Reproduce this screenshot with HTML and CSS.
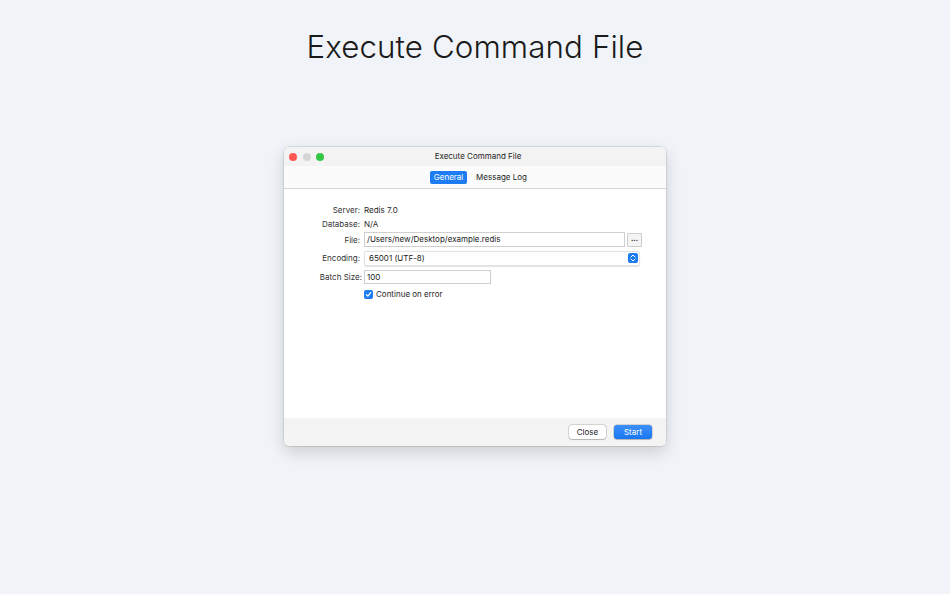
FILE: index.html
```html
<!DOCTYPE html>
<html>
<head>
<meta charset="utf-8">
<link rel="stylesheet" href="styles.css">
</head>
<body>
<h1 class="page-title">Execute Command File</h1>
<div class="window">
  <div class="titlebar">
    <div class="lights">
      <span class="light red"></span>
      <span class="light gray"></span>
      <span class="light green"></span>
    </div>
    <div class="win-title">Execute Command File</div>
  </div>
  <div class="tabbar">
    <span class="tab active">General</span>
    <span class="tab">Message Log</span>
  </div>
  <div class="content">
    <div class="form">
      <div class="label r1">Server:</div>
      <div class="value r1">Redis 7.0</div>
      <div class="label r2">Database:</div>
      <div class="value r2">N/A</div>
      <div class="label r3">File:</div>
      <div class="value r3 file-row">
        <div class="input file-input">/Users/new/Desktop/example.redis</div>
        <div class="dots">...</div>
      </div>
      <div class="label r4">Encoding:</div>
      <div class="value r4">
        <div class="select">
          <span>65001 (UTF-8)</span>
          <span class="stepper">
            <svg width="6" height="8" viewBox="0 0 6 8"><path d="M1 3 L3 1 L5 3 M1 5 L3 7 L5 5" fill="none" stroke="#fff" stroke-width="1" stroke-linecap="round" stroke-linejoin="round"/></svg>
          </span>
        </div>
      </div>
      <div class="label r5 tight">Batch Size:</div>
      <div class="value r5">
        <div class="input batch-input">100</div>
      </div>
      <div class="value r6 check-row">
        <span class="checkbox">
          <svg width="7" height="7" viewBox="0 0 7 7"><path d="M1.3 3.6 L2.8 5.1 L5.7 1.6" fill="none" stroke="#fff" stroke-width="1.3" stroke-linecap="round" stroke-linejoin="round"/></svg>
        </span>
        <span>Continue on error</span>
      </div>
    </div>
  </div>
  <div class="footer">
    <span class="btn">Close</span>
    <span class="btn primary">Start</span>
  </div>
</div>
</body>
</html>
```
FILE: styles.css
```css
html, body {
  margin: 0;
  padding: 0;
}
body {
  background: #f0f4f8;
  font-family: Inter, "Noto Sans", sans-serif;
  width: 950px;
  height: 594px;
  overflow: hidden;
}
.page-title {
  margin: 0;
  padding-top: 26px;
  height: 42px;
  line-height: 42px;
  text-align: center;
  font-weight: 300;
  font-size: 31.3px;
  color: #1a1a1a;
  letter-spacing: 0.1px;
}
.window {
  margin: 79px auto 0;
  width: 382px;
  height: 299px;
  border-radius: 5px;
  background: #fff;
  box-shadow: 0 0 0 0.5px rgba(0,0,0,0.18), 0 6px 16px rgba(0,0,0,0.16);
  display: flex;
  flex-direction: column;
  overflow: hidden;
}
.titlebar {
  height: 19px;
  background: #f3f3f3;
  display: flex;
  align-items: center;
  position: relative;
}
.lights {
  display: flex;
  gap: 5.5px;
  padding-left: 5px;
}
.light {
  width: 8px;
  height: 8px;
  border-radius: 50%;
}
.red { background: #fc5753; }
.gray { background: #d5d5d5; }
.green { background: #33c748; }
.win-title {
  position: absolute;
  left: 0;
  right: 0;
  top: 0;
  line-height: 19px;
  text-align: center;
  font-size: 8px;
  color: #262626;
  padding-left: 6px;
}
.tabbar {
  height: 22px;
  background: #fbfbfb;
  border-bottom: 1px solid #d6d6d6;
  display: flex;
  align-items: center;
  justify-content: center;
  gap: 5px;
  padding-left: 11px;
}
.tab {
  font-size: 8px;
  color: #1e1e1e;
  padding: 0 4px;
  height: 13px;
  line-height: 13px;
  border-radius: 2px;
}
.tab.active {
  width: 37px;
  padding: 0;
  text-align: center;
  background: #1d7cf2;
  color: #fff;
}
.content {
  flex: 1;
  background: #fff;
}
.form {
  display: grid;
  grid-template-columns: 76px 1fr;
  grid-template-rows: 14px 14px 17px 20px 18px 16px;
  padding-top: 14px;
  font-size: 8px;
  color: #262626;
}
.label {
  grid-column: 1;
  text-align: right;
  display: flex;
  align-items: center;
  justify-content: flex-end;
  color: #333;
}
.value {
  grid-column: 2;
  display: flex;
  align-items: center;
  padding-left: 4px;
}
.r1 { grid-row: 1; }
.r2 { grid-row: 2; }
.r3 { grid-row: 3; }
.r4 { grid-row: 4; }
.r5 { grid-row: 5; }
.r6 { grid-row: 6; }
.tight { margin-right: -2px; }
.file-row { gap: 2px; }
.input {
  height: 13px;
  line-height: 13px;
  border: 1px solid #cfcfcf;
  background: #fff;
  padding-left: 2px;
  box-sizing: content-box;
  color: #222;
}
.file-input {
  width: 257px;
}
.dots {
  width: 13px;
  height: 12px;
  border: 1px solid #cdcdcd;
  background: #f4f4f4;
  border-radius: 1px;
  font-size: 7px;
  line-height: 9px;
  text-align: center;
  font-weight: 700;
  color: #333;
}
.select {
  width: 269px;
  height: 13px;
  border: 1px solid #e2e2e2;
  border-radius: 2px;
  box-shadow: 0 0.5px 1px rgba(0,0,0,0.12);
  display: flex;
  align-items: center;
  justify-content: space-between;
  padding-left: 4px;
  padding-right: 1px;
  box-sizing: content-box;
  color: #222;
}
.stepper {
  width: 10px;
  height: 10px;
  border-radius: 2px;
  background: #1d7cf2;
  display: flex;
  align-items: center;
  justify-content: center;
}
.batch-input {
  width: 123px;
  height: 12px;
  line-height: 12px;
}
.check-row {
  gap: 3px;
}
.checkbox {
  width: 9px;
  height: 9px;
  border-radius: 2px;
  background: #1d7cf2;
  display: flex;
  align-items: center;
  justify-content: center;
}
.footer {
  height: 28px;
  background: #f4f4f4;
  display: flex;
  align-items: center;
  justify-content: flex-end;
  gap: 8px;
  padding-right: 14px;
}
.btn {
  width: 37px;
  height: 14px;
  line-height: 14px;
  text-align: center;
  font-size: 8px;
  border-radius: 3px;
  background: #fff;
  color: #222;
  box-shadow: 0 0 0 0.5px rgba(0,0,0,0.25), 0 0.5px 1px rgba(0,0,0,0.15);
}
.btn.primary {
  width: 38px;
  background: linear-gradient(#3b8ff7, #1b77f0);
  color: #fff;
}
```
